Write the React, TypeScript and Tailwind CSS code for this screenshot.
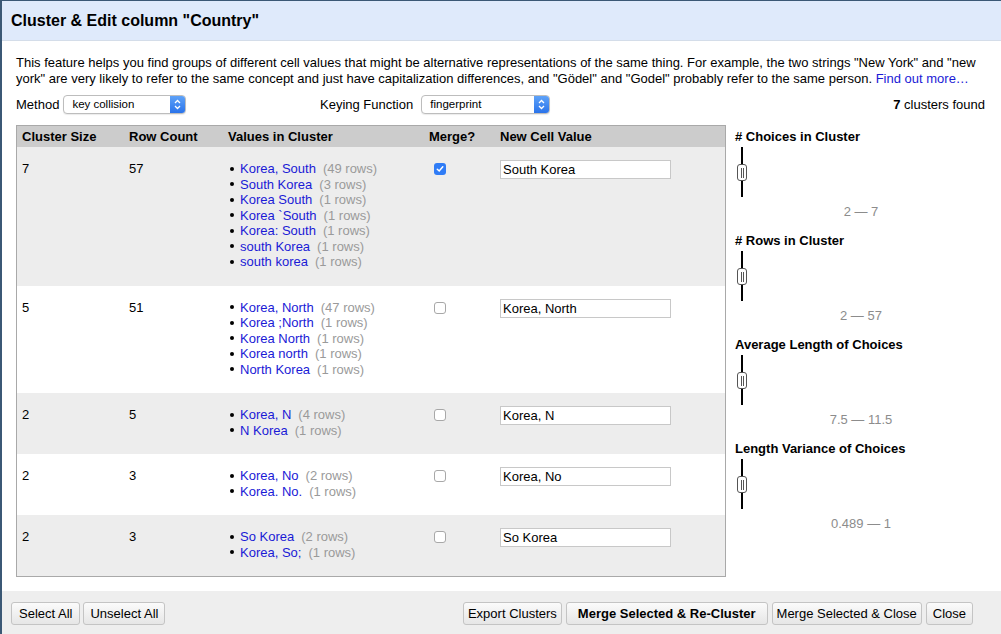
import React from "react";

type Val = { v: string; n: number };
type Cluster = { size: number; rows: number; values: Val[]; checked: boolean; newVal: string };

const clusters: Cluster[] = [
  {
    size: 7,
    rows: 57,
    checked: true,
    newVal: "South Korea",
    values: [
      { v: "Korea, South", n: 49 },
      { v: "South Korea", n: 3 },
      { v: "Korea South", n: 1 },
      { v: "Korea `South", n: 1 },
      { v: "Korea: South", n: 1 },
      { v: "south Korea", n: 1 },
      { v: "south korea", n: 1 },
    ],
  },
  {
    size: 5,
    rows: 51,
    checked: false,
    newVal: "Korea, North",
    values: [
      { v: "Korea, North", n: 47 },
      { v: "Korea ;North", n: 1 },
      { v: "Korea North", n: 1 },
      { v: "Korea north", n: 1 },
      { v: "North Korea", n: 1 },
    ],
  },
  {
    size: 2,
    rows: 5,
    checked: false,
    newVal: "Korea, N",
    values: [
      { v: "Korea, N", n: 4 },
      { v: "N Korea", n: 1 },
    ],
  },
  {
    size: 2,
    rows: 3,
    checked: false,
    newVal: "Korea, No",
    values: [
      { v: "Korea, No", n: 2 },
      { v: "Korea. No.", n: 1 },
    ],
  },
  {
    size: 2,
    rows: 3,
    checked: false,
    newVal: "So Korea",
    values: [
      { v: "So Korea", n: 2 },
      { v: "Korea, So;", n: 1 },
    ],
  },
];

const facets = [
  { title: "# Choices in Cluster", range: "2 — 7" },
  { title: "# Rows in Cluster", range: "2 — 57" },
  { title: "Average Length of Choices", range: "7.5 — 11.5" },
  { title: "Length Variance of Choices", range: "0.489 — 1" },
];

function Select({ label, width }: { label: string; width: string }) {
  return (
    <div
      className={`${width} h-[19px] flex items-stretch rounded-[4px] border border-[#bdbdbd] bg-white overflow-hidden shadow-[0_1px_1px_rgba(0,0,0,0.08)]`}
    >
      <div className="flex-1 pl-[8px] text-[11.5px] leading-[17px] text-black">{label}</div>
      <div className="w-[15px] bg-gradient-to-b from-[#5ea2f8] to-[#2a73ea] flex items-center justify-center">
        <svg width="7" height="11" viewBox="0 0 7 11">
          <path d="M1 4 L3.5 1.5 L6 4" stroke="white" strokeWidth="1.3" fill="none" />
          <path d="M1 7 L3.5 9.5 L6 7" stroke="white" strokeWidth="1.3" fill="none" />
        </svg>
      </div>
    </div>
  );
}

function Checkbox({ checked }: { checked: boolean }) {
  if (checked) {
    return (
      <div className="w-[12px] h-[12px] rounded-[3px] bg-[#2f7cf6] flex items-center justify-center">
        <svg width="8" height="8" viewBox="0 0 8 8">
          <path d="M1.3 4.2 L3.2 6 L6.8 1.8" stroke="white" strokeWidth="1.5" fill="none" strokeLinecap="round" />
        </svg>
      </div>
    );
  }
  return <div className="w-[12px] h-[12px] rounded-[3px] border border-[#a8a8a8] bg-white" />;
}

function Slider() {
  return (
    <div className="relative h-[50px] w-[12px] ml-[1px]">
      <div className="absolute left-[5px] top-0 h-[50px] w-[2px] bg-black" />
      <div className="absolute left-[1px] top-[17px] w-[10px] h-[17px] rounded-[3px] border border-[#555] bg-white flex items-center justify-center gap-[1px]">
        <div className="w-[1px] h-[10px] bg-[#555]" />
        <div className="w-[1px] h-[10px] bg-[#555]" />
      </div>
    </div>
  );
}

function Btn({ children, bold, pad }: { children: React.ReactNode; bold?: boolean; pad?: string }) {
  return (
    <button
      className={`h-[23px] rounded-[3px] border border-[#c4c4c4] bg-gradient-to-b from-[#fbfbfb] to-[#e6e6e6] text-[13px] text-black leading-[21px] ${
        bold ? "font-bold" : ""
      } ${pad ?? "px-[4px]"}`}
    >
      {children}
    </button>
  );
}

export default function App() {
  return (
    <div
      className="w-[1001px] h-[634px] flex flex-col bg-white border-l-2 border-t border-[#3b5875] text-black overflow-hidden"
      style={{ fontFamily: '"Liberation Sans", Arial, Helvetica, sans-serif' }}
    >
      <div className="h-[40px] bg-[#dfeafb] flex items-center pl-[9px] border-b border-[#d4dde9]">
        <h1 className="text-[16px] font-bold">Cluster &amp; Edit column "Country"</h1>
      </div>

      <div className="flex-1 flex flex-col px-[14px] pt-[14px]">
        <p className="text-[13px] leading-[16px] pr-[2px]">
          This feature helps you find groups of different cell values that might be alternative representations of the
          same thing. For example, the two strings "New York" and "new york" are very likely to refer to the same concept
          and just have capitalization differences, and "Gödel" and "Godel" probably refer to the same person.{" "}
          <span className="text-[#1a1ad6]">Find out more…</span>
        </p>

        <div className="flex items-center h-[19px] mt-[8px] text-[13px]">
          <div className="w-[304px] flex items-center gap-[4px]">
            <span>Method</span>
            <Select label="key collision" width="w-[123px]" />
          </div>
          <div className="flex items-center gap-[8px]">
            <span>Keying Function</span>
            <Select label="fingerprint" width="w-[129px]" />
          </div>
          <div className="ml-auto mr-[2px]">
            <span className="font-bold">7</span> clusters found
          </div>
        </div>

        <div className="flex mt-[11px]">
          <div className="w-[710px] h-[452px] border border-[#a9a9a9] bg-[#ededed] text-[13px]">
            <div className="grid grid-cols-[107px_99px_201px_71px_1fr] h-[21px] bg-[#cccccc] font-bold items-center">
              <div className="px-[5px]">Cluster Size</div>
              <div className="px-[5px]">Row Count</div>
              <div className="px-[5px]">Values in Cluster</div>
              <div className="px-[5px]">Merge?</div>
              <div className="px-[5px]">New Cell Value</div>
            </div>
            {clusters.map((c, i) => (
              <div
                key={i}
                className={`grid grid-cols-[107px_99px_201px_71px_1fr] pt-[14px] pb-[16px] leading-[15.5px] ${
                  i % 2 === 0 ? "bg-[#ededed]" : "bg-white"
                }`}
              >
                <div className="px-[5px]">{c.size}</div>
                <div className="px-[5px]">{c.rows}</div>
                <div className="px-[5px]">
                  {c.values.map((v, j) => (
                    <div key={j} className="flex items-center">
                      <span className="w-[4px] h-[4px] rounded-full bg-black ml-[2px] mr-[6px]" />
                      <span className="text-[#1a1ad6]">{v.v}</span>
                      <span className="text-[#9a9a9a] ml-[7px]">({v.n} rows)</span>
                    </div>
                  ))}
                </div>
                <div className="px-[5px] pl-[10px] pt-[2px]">
                  <Checkbox checked={c.checked} />
                </div>
                <div className="px-[5px]">
                  <div className="w-[171px] h-[19px] -mt-[1px] border border-[#c8c8c8] bg-white pl-[2px] leading-[17px]">
                    {c.newVal}
                  </div>
                </div>
              </div>
            ))}
          </div>

          <div className="flex-1 pl-[9px] pt-[2px]">
            {facets.map((f, i) => (
              <div key={i} className="h-[104px]">
                <div className="text-[13px] font-bold leading-[20px]">{f.title}</div>
                <Slider />
                <div className="text-[13px] text-[#8c8c8c] text-center mt-[5px]">{f.range}</div>
              </div>
            ))}
          </div>
        </div>
      </div>

      <div className="h-[43px] bg-[#eeeeee] flex items-start pt-[11px] pl-[9px] pr-[28px]">
        <div className="flex gap-[3px]">
          <Btn pad="px-[7px]">Select All</Btn>
          <Btn pad="px-[6px]">Unselect All</Btn>
        </div>
        <div className="ml-auto flex gap-[4px]">
          <Btn>Export Clusters</Btn>
          <Btn bold pad="px-[11px]">Merge Selected &amp; Re-Cluster</Btn>
          <Btn>Merge Selected &amp; Close</Btn>
          <Btn pad="px-[6px]">Close</Btn>
        </div>
      </div>
    </div>
  );
}
